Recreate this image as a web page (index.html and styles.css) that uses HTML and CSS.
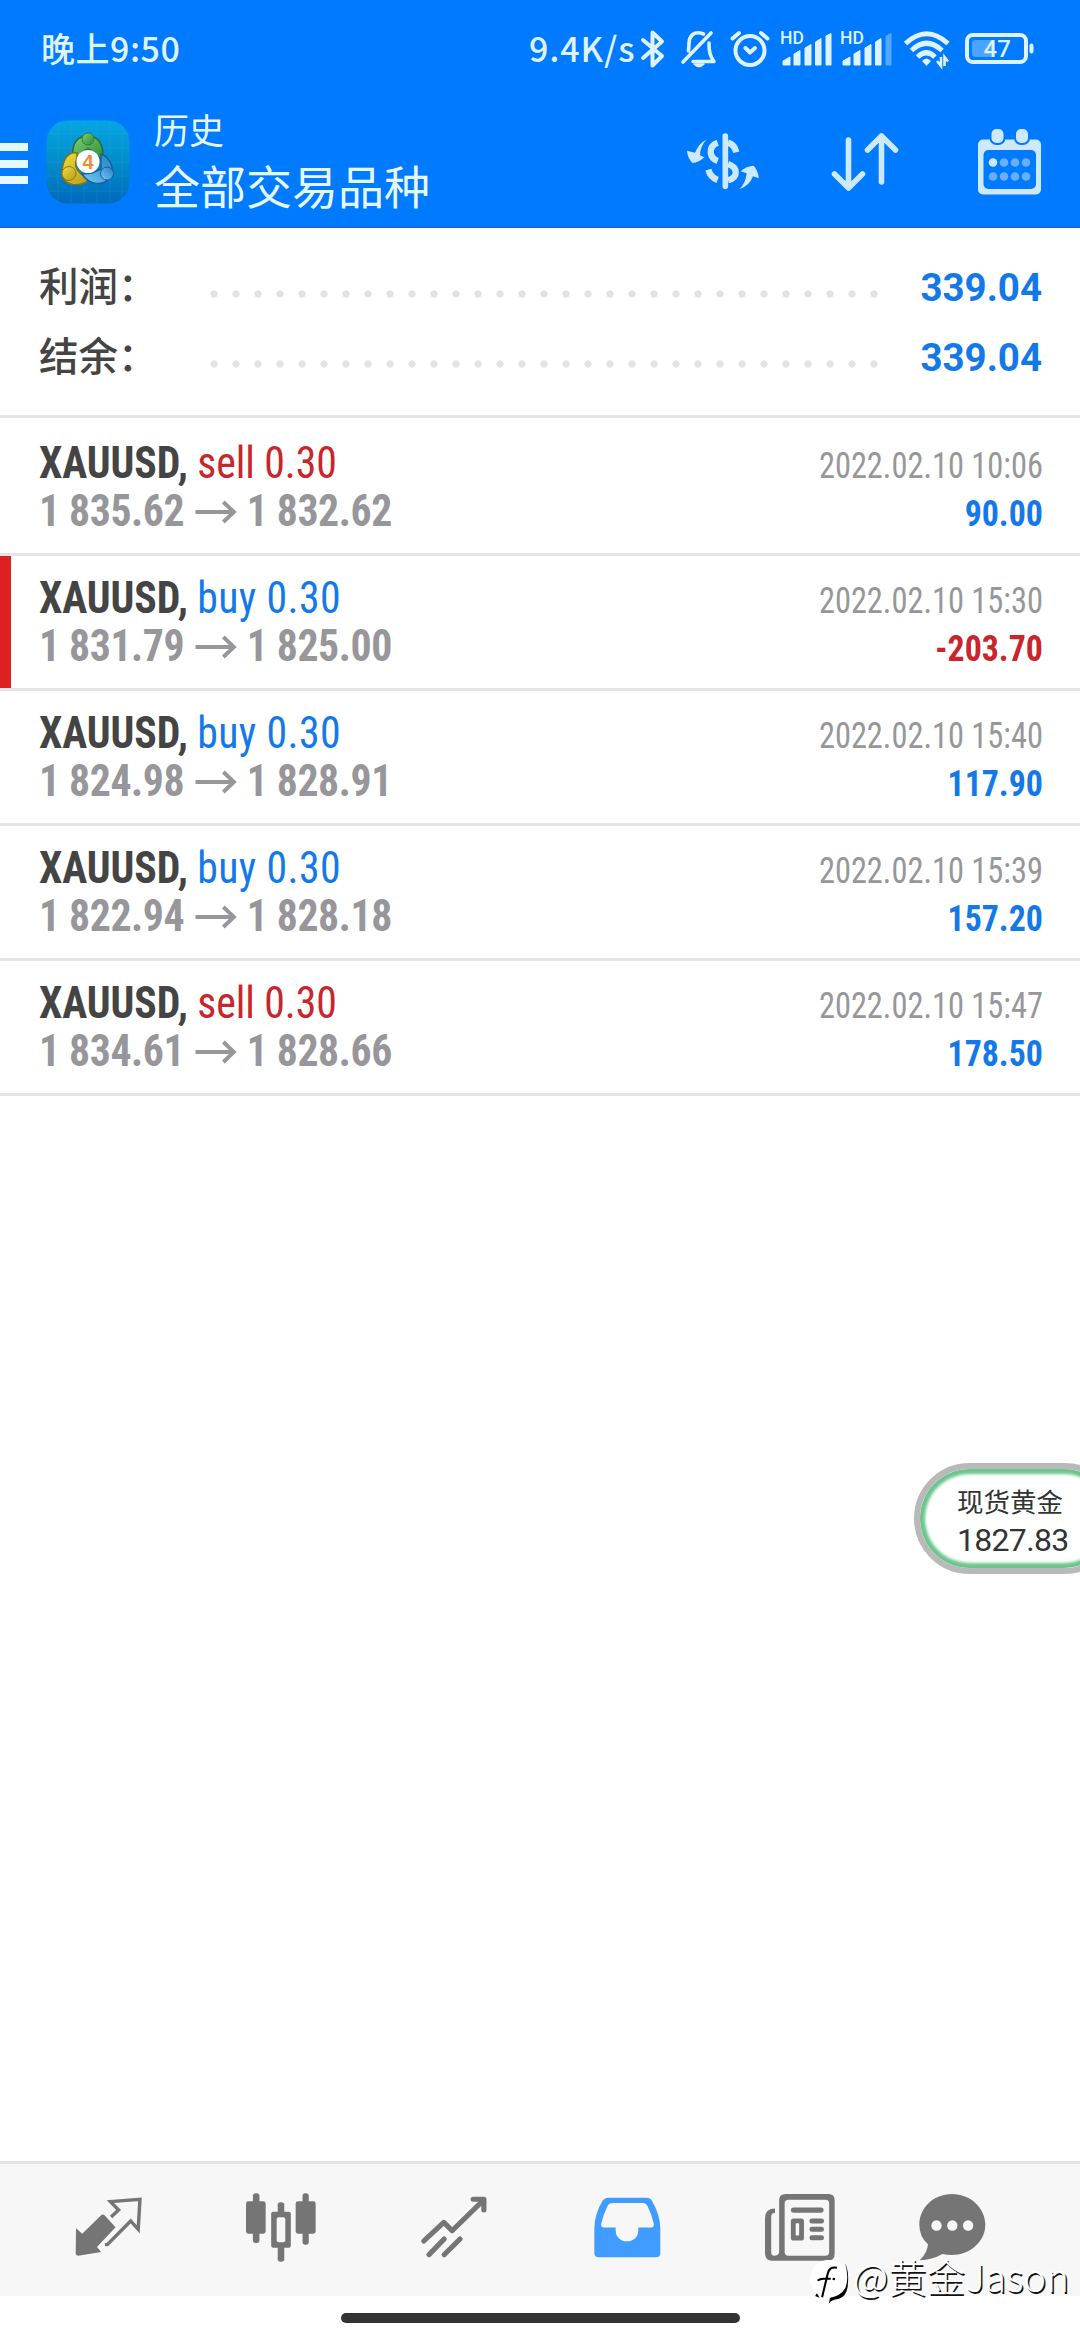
FILE: index.html
```html
<!DOCTYPE html>
<html lang="zh-CN">
<head>
<meta charset="utf-8">
<title>历史</title>
<link rel="stylesheet" href="styles.css">
</head>
<body>
<div class="screen">
  <header class="top">
    <div class="status">
      <span class="clock">晚上9:50</span>
      <span class="speed">9.4K/s</span>
      <svg class="bt" width="26" height="40" viewBox="0 0 26 40" fill="none" stroke="#def2ff" stroke-width="4" stroke-linejoin="round" stroke-linecap="round"><path d="M3 11L22 27L12.500 36.500V3.500L22 12.500L3 29"/></svg>
      <svg class="bell" width="36" height="40" viewBox="0 0 36 40" fill="none" stroke="#def2ff" stroke-width="3.600" stroke-linecap="round" stroke-linejoin="round"><path d="M2 33L30 4M22.500 5C13 1 8 7 8 15L7.500 22M28 14C28 23 29 27 33 32.500H12"/><path d="M13 35H23Q18 40 13 35Z" fill="#def2ff" stroke-width="1.500"/></svg>
      <svg class="alarm" width="40" height="38" viewBox="0 0 40 38" fill="none" stroke="#def2ff" stroke-width="4" stroke-linecap="round" stroke-linejoin="round"><circle cx="20" cy="20.500" r="14.500"/><path d="M2.500 8.500L9 3M37.500 8.500L31 3M15.500 18L20 22.500L25 18"/></svg>
      <svg class="sig" width="52" height="38" viewBox="0 -4 52 38" fill="#def2ff"><text x="0" y="12" class="hd">HD</text><path d="M3 33V29L10 25V33ZM14 33V22L20 18.500V33ZM25 33V16L31 12.500V33ZM35.500 33V10L41 6.500V33ZM46 33V4L51 1.500V33Z" stroke="#def2ff" stroke-linejoin="round"/></svg>
      <svg class="sig" width="52" height="38" viewBox="0 -4 52 38" fill="#def2ff"><text x="0" y="12" class="hd">HD</text><path d="M3 33V29L10 25V33ZM14 33V22L20 18.500V33ZM25 33V16L31 12.500V33ZM35.500 33V10L41 6.500V33Z" stroke="#def2ff" stroke-linejoin="round"/><path d="M46 33V4L51 1.500V33Z" fill="#52a9ff" stroke="#52a9ff" stroke-linejoin="round"/></svg>
      <svg class="wifi" width="48" height="37" viewBox="0 0 48 37" fill="none" stroke="#def2ff" stroke-width="5"><path d="M2.500 12.500Q23.500-7 45 12.500M8.500 19.500Q23.500 5 39 19.500M14.500 26Q23.500 17.500 32 26"/><path d="M19 30Q23.500 25 28 30L23.500 35Z" fill="#def2ff" stroke="none"/><path d="M38 26V35L34 30M41.500 35V26L45 30.500" stroke-width="2.600"/></svg>
      <svg class="batt" width="70" height="32" viewBox="0 0 70 32"><rect x="2" y="2" width="59" height="27" rx="6" fill="none" stroke="#def2ff" stroke-width="4"/><rect x="7" y="7" width="22" height="17" rx="3" fill="#4ba5ff"/><rect x="64.500" y="10.500" width="4" height="10" rx="2" fill="#def2ff"/><text x="18.500" y="24" class="pct">47</text></svg>
    </div>
    <div class="bar">
      <div class="menu"><i></i><i></i><i></i></div>
      <svg class="logo" width="84" height="84" viewBox="0 0 84 84">
        <defs>
          <linearGradient id="bg" x1="0" y1="0" x2="0" y2="1"><stop offset="0" stop-color="#06a5e4"/><stop offset=".5" stop-color="#028dc9"/><stop offset="1" stop-color="#0068bd"/></linearGradient>
          <linearGradient id="g" x1="0" y1="0" x2="1" y2="1"><stop offset="0" stop-color="#82cf78"/><stop offset="1" stop-color="#288b36"/></linearGradient>
          <linearGradient id="y" x1="0" y1="0" x2="1" y2="1"><stop offset="0" stop-color="#efdf46"/><stop offset="1" stop-color="#b59b13"/></linearGradient>
          <linearGradient id="b" x1="0" y1="1" x2="1" y2="0"><stop offset="0" stop-color="#79c9f1"/><stop offset="1" stop-color="#207fc6"/></linearGradient>
        </defs>
        <rect x=".5" y=".5" width="83" height="83" rx="21" fill="url(#bg)"/>
        <path d="M12 2V82M25 1V83M38 1V83M51 1V83M64 1V83M76 5V79M1 14H83M1 28H83M1 42H83M1 56H83M1 71H83" stroke="#36b9e4" stroke-width=".7" opacity=".25"/>
        <path d="M27 38C25 20 34 16 42 16C51 16 58 22 57 40L49 35Q42 23 35 35Z" fill="url(#g)" stroke="#236e38" stroke-width="1.500"/>
        <path d="M31 33C20 31 16 43 16 55C19 67 34 67 43 60L34 53Q27 47 31 38Z" fill="url(#y)" stroke="#846f18" stroke-width="1.500"/>
        <path d="M55 34C65 38 69 49 64 57C57 68 42 64 36 54L46 53L55 49Z" fill="url(#b)" stroke="#175f9e" stroke-width="1.500"/>
        <circle cx="42" cy="19" r="6" fill="url(#g)" stroke="#337d35"/><circle cx="23" cy="53.500" r="7" fill="url(#y)" stroke="#90751a"/><circle cx="61" cy="53.500" r="6.500" fill="url(#b)" stroke="#145f9a"/>
        <circle cx="42" cy="41.500" r="11.500" fill="#fff"/><text x="42" y="48.500" text-anchor="middle" class="four">4</text>
      </svg>
      <div class="titles"><div class="t1">历史</div><div class="t2">全部交易品种</div></div>
      <svg class="a1" width="74" height="58" viewBox="76 96 222 174" fill="none" stroke="#cce9ff" stroke-width="19"><path d="M194 105V256" stroke-width="17" stroke-linecap="round"/><path d="M171 125Q149 133 150 154Q152 173 171 180M143 206Q149 229 171 237M202 125Q221 130 227 154M202 189C233 200 233 229 202 238"/><path d="M137 116Q115 126 103 155L79 149Q80 170 95 186Q113 186 131 169L118 163Q118 137 137 116ZM236 265Q255 247 258 217L240 211Q257 195 279 194Q293 209 294 232L277 226Q266 255 236 265Z" fill="#cce9ff" stroke="none"/></svg>
      <svg class="a2" width="68" height="60" viewBox="0 0 68 60" fill="none" stroke="#cce9ff" stroke-width="5.600" stroke-linecap="round" stroke-linejoin="round"><path d="M17.500 8V56M3.500 42L17.500 56L31.500 42M50.500 50V4M36.500 18L50.500 4L64.500 18"/></svg>
      <svg class="a3" width="63" height="66" viewBox="0 0 63 66"><rect x="0" y="10.500" width="63" height="55" rx="5" fill="#cce9ff"/><rect x="5.500" y="21" width="52.500" height="39" rx="5" fill="#007aff"/><rect x="11.500" y="-1" width="16" height="17" rx="7" fill="#007aff"/><rect x="36" y="-1" width="16" height="17" rx="7" fill="#007aff"/><rect x="13.500" y="0" width="12" height="14" rx="5" fill="#cce9ff"/><rect x="38" y="0" width="12" height="14" rx="5" fill="#cce9ff"/><circle cx="15" cy="33.500" r="4.300" fill="#cce9ff"/><g fill="#66b0ff"><circle cx="26" cy="33.500" r="4.300"/><circle cx="37" cy="33.500" r="4.300"/><circle cx="48" cy="33.500" r="4.300"/><circle cx="15" cy="47.500" r="4.300"/><circle cx="26" cy="47.500" r="4.300"/><circle cx="37" cy="47.500" r="4.300"/><circle cx="48" cy="47.500" r="4.300"/></g></svg>
    </div>
  </header>

  <section class="summary">
    <div class="sum"><span class="lab">利润：</span><span class="dots"></span><b>339.04</b></div>
    <div class="sum"><span class="lab">结余：</span><span class="dots"></span><b>339.04</b></div>
  </section>

  <main class="deals">
    <div class="deal">
      <div class="l"><div class="sym"><b>XAUUSD,</b> <span class="red">sell 0.30</span></div><div class="px"><span>1 835.62</span><svg width="44" height="24" viewBox="0 0 44 24"><use href="#arr"/></svg><span>1 832.62</span></div></div>
      <div class="r"><div class="dt">2022.02.10 10:06</div><div class="pl blue">90.00</div></div>
    </div>
    <div class="deal loss">
      <div class="l"><div class="sym"><b>XAUUSD,</b> <span class="blue buy">buy 0.30</span></div><div class="px"><span>1 831.79</span><svg width="44" height="24" viewBox="0 0 44 24"><use href="#arr"/></svg><span>1 825.00</span></div></div>
      <div class="r"><div class="dt">2022.02.10 15:30</div><div class="pl red">-203.70</div></div>
    </div>
    <div class="deal">
      <div class="l"><div class="sym"><b>XAUUSD,</b> <span class="blue buy">buy 0.30</span></div><div class="px"><span>1 824.98</span><svg width="44" height="24" viewBox="0 0 44 24"><use href="#arr"/></svg><span>1 828.91</span></div></div>
      <div class="r"><div class="dt">2022.02.10 15:40</div><div class="pl blue">117.90</div></div>
    </div>
    <div class="deal">
      <div class="l"><div class="sym"><b>XAUUSD,</b> <span class="blue buy">buy 0.30</span></div><div class="px"><span>1 822.94</span><svg width="44" height="24" viewBox="0 0 44 24"><use href="#arr"/></svg><span>1 828.18</span></div></div>
      <div class="r"><div class="dt">2022.02.10 15:39</div><div class="pl blue">157.20</div></div>
    </div>
    <div class="deal">
      <div class="l"><div class="sym"><b>XAUUSD,</b> <span class="red">sell 0.30</span></div><div class="px"><span>1 834.61</span><svg width="44" height="24" viewBox="0 0 44 24"><use href="#arr"/></svg><span>1 828.66</span></div></div>
      <div class="r"><div class="dt">2022.02.10 15:47</div><div class="pl blue">178.50</div></div>
    </div>
  </main>

  <nav class="tabs">
    <svg width="67" height="60" viewBox="217 146 195 180" preserveAspectRatio="none" fill="#757575"><path d="M220 240L238 256L293 201Q298 196 303 201L335 237L281 296L293 311L226 322Q219 322 219 315Z"/><path d="M322 206L344 185L320 160L406 153L401 243L379 218L311 289H304" fill="none" stroke="#757575" stroke-width="10"/></svg>
    <svg width="70" height="69" viewBox="715 131 203 207" preserveAspectRatio="none" fill="#757575"><rect x="715" y="156" width="57" height="97" rx="7"/><rect x="735" y="132" width="19" height="149" rx="8"/><rect x="859" y="156" width="58" height="97" rx="7"/><rect x="879" y="132" width="18" height="154" rx="8"/><rect x="807" y="159" width="19" height="178" rx="8"/><rect x="788" y="187" width="57" height="108" rx="6"/><rect x="804" y="204" width="25" height="75" rx="6" fill="#f7f7f7"/></svg>
    <svg width="66" height="62" viewBox="1223 139 191 186" preserveAspectRatio="none" fill="none" stroke="#757575" stroke-width="15" stroke-linecap="round" stroke-linejoin="round"><path d="M1231 274L1289 218L1313 243L1402 153M1246 315L1290 268M1290 315L1336 268"/><path d="M1374 149H1405V181" stroke-width="15"/></svg>
    <svg width="67" height="61" viewBox="157 139 195 184" preserveAspectRatio="none"><path d="M197 141H310Q320 141 326 151Q350 194 350 235V308Q350 321 337 321H171Q158 321 158 308V235Q158 190 183 149Q188 141 197 141Z" fill="#419cff"/><path d="M211 157H298Q308 157 313 167Q325 192 331 220Q333 231 323 231H286V239C286 284 220 284 220 239V231H186Q176 231 178 220Q184 192 196 167Q201 157 211 157Z" fill="#f7f7f7"/></svg>
    <svg width="70" height="67" viewBox="656 131 203 200" preserveAspectRatio="none"><path d="M685 174V188Q674 187 674 200V306Q674 315 684 315Q697 315 697 302V150Q697 131 716 131H840Q858 131 858 149V311Q858 330 838 330H677Q656 330 656 308V203Q656 174 685 174Z" fill="#757575"/><rect x="713" y="148" width="129" height="167" rx="11" fill="#f7f7f7"/><g fill="#757575"><rect x="731" y="171" width="95" height="16" rx="8"/><rect x="731" y="204" width="38" height="66" rx="8"/><rect x="785" y="204" width="42" height="15" rx="7"/><rect x="785" y="229" width="42" height="15" rx="7"/><rect x="785" y="254" width="42" height="15" rx="7"/></g><rect x="745" y="218" width="10" height="37" fill="#f7f7f7" rx="2"/></svg>
    <svg width="67" height="67" viewBox="1102 131 195 200" preserveAspectRatio="none"><path d="M1198 131C1252 131 1295 173 1295 223C1295 282 1234 326 1170 310Q1140 328 1104 329Q1127 306 1128 281Q1103 259 1103 223C1103 173 1144 131 1198 131Z" fill="#757575"/><g fill="#f7f7f7"><ellipse cx="1153" cy="225" rx="15" ry="16"/><ellipse cx="1199" cy="225" rx="15" ry="16"/><ellipse cx="1245" cy="225" rx="15" ry="16"/></g></svg>
  </nav>
  <div class="home"><i></i></div>

  <aside class="float"><div class="fn">现货黄金</div><div class="fv">1827.83</div></aside>
  <div class="mark">
    <svg width="38" height="46" viewBox="784 330 110 138" preserveAspectRatio="none"><ellipse cx="838" cy="387" rx="54" ry="57" fill="#fff"/><path d="M862 353Q840 348 835 372L819 442M806 392Q812 386 824 386H844" fill="none" stroke="#000" stroke-width="6"/><path d="M886 340Q898 385 886 415Q872 439 842 443L838 461Q846 449 866 447Q889 440 893 410Q898 366 886 340Z"/><circle cx="853" cy="387" r="4"/><path d="M799 438L812 443L804 430Z"/></svg>
    <span>@黄金Jason</span>
  </div>
  <svg class="defs" width="0" height="0"><defs><g id="arr"><path d="M1 12H41M30 2L41 12L30 22" fill="none" stroke="#97979b" stroke-width="4"/></g></defs></svg>
</div>
</body>
</html>
```
FILE: styles.css
```css
* { box-sizing: border-box; }
body { margin: 0; background: #fff; font-family: Roboto, "Noto Sans CJK SC", sans-serif; }
svg { display: block; flex: none; overflow: visible; }
i { display: block; }
.screen { position: relative; width: 1080px; height: 2340px; overflow: hidden; display: flex; flex-direction: column; background: #fff; }
.defs { position: absolute; }

.top { height: 228px; background: #007aff; border-bottom: 2px solid #146cd3; color: #e6f8ff; }
.status { height: 98px; display: flex; align-items: center; padding-left: 41px; color: #def2ff; font: 500 34px/40px "Noto Sans CJK SC", sans-serif; }
.clock { width: 488px; letter-spacing: .5px; font-size: 34px; padding-bottom: 3px; }
.speed { width: 111px; letter-spacing: .9px; white-space: nowrap; padding-bottom: 3px; }
.bell { margin-left: 15px; }
.alarm { margin-left: 13px; }
.sig { margin: 0 0 4px 10px; }
.sig + .sig { margin-left: 8px; }
.wifi { margin-left: 11px; }
.batt { margin: 0 0 1px 14px; }
.hd { font: 500 17.500px Roboto, sans-serif; }
.pct { font: 500 24px Roboto, sans-serif; fill: #def2ff; }
.four { font: bold 20px "Liberation Sans", sans-serif; fill: #f08a3c; }

.bar { height: 128px; display: flex; align-items: center; }
.menu { width: 28px; display: grid; gap: 8.500px; margin: 3px 18px 0 0; }
.menu i { height: 8px; background: #e6f8ff; }
.titles { width: 556px; padding: 0 0 7px 24px; font-family: "Noto Sans CJK SC", sans-serif; }
.t1 { font-size: 35px; line-height: 50px; }
.t2 { font-size: 46px; line-height: 60px; }
.a2 { margin-left: 71px; }
.a3 { margin-left: 79px; }

.summary { height: 190px; padding: 22px 38px 0 39px; border-bottom: 3px solid #e4e4e4; }
.sum { height: 70px; display: flex; align-items: center; }
.lab { width: 164px; padding-bottom: 2px; font: 500 39.500px/60px "Noto Sans CJK SC", sans-serif; color: #444; }
.dots { width: 682px; height: 22px; margin: 18px auto 0 0; background: radial-gradient(circle, #e3e3e3 3.300px, transparent 4px) 0 0 / 22px 22px; }
.sum b { font-size: 38.500px; line-height: 60px; color: #1479e8; padding-top: 5px; }

.deals { flex: 1; padding-top: 3px; }
.deal { height: 135px; display: flex; justify-content: space-between; padding: 17px 37px 0 39px; border-bottom: 3px solid #e4e4e4; font-stretch: 75%; position: relative; }
.loss::before { content: ""; position: absolute; left: 0; top: 0; bottom: 0; width: 11px; background: #e02020; }
.l { padding-top: 2px; transform: scaleX(.96); transform-origin: left; }
.sym { font-size: 43.500px; line-height: 48px; color: #444; white-space: nowrap; letter-spacing: -.1px; }
.buy { letter-spacing: .4px; }
.px { display: flex; align-items: center; font-size: 43.500px; line-height: 48px; font-weight: bold; color: #97979b; white-space: nowrap; letter-spacing: -.4px; }
.px svg { margin: 0 10px 0 11px; }
.r { text-align: right; padding-top: 4px; }
.dt { font-size: 36px; line-height: 48px; color: #97979a; transform: scaleX(.9); transform-origin: right; }
.pl { font-size: 36px; line-height: 48px; font-weight: bold; transform: scaleX(.94); transform-origin: right; }
.blue { color: #1479e8; }
.red { color: #c8262c; }

.tabs { height: 135px; border-top: 3px solid #e2e2e2; background: #f7f7f7; padding: 0 0 6px 21.500px; display: grid; grid-template-columns: repeat(5, 173px) 131px; align-items: center; justify-items: center; }
.home { height: 44px; display: flex; justify-content: center; padding-top: 17px; }
.home i { width: 399px; height: 10px; border-radius: 5px; background: #333; }

.float { position: absolute; left: 914px; top: 1463px; width: 206px; height: 111px; border: 6px solid #b9b9b9; border-radius: 56px; box-shadow: inset 0 0 3px 5px #6cc58d; background: #fff; padding: 15px 0 0 37px; color: #333; }
.fn { font: 26.500px/34px "Noto Sans CJK SC", sans-serif; }
.fv { font-size: 32px; line-height: 44px; letter-spacing: -.7px; }
.mark { position: absolute; left: 810px; top: 2260px; display: flex; color: #fff; font: 300 38.500px/42px "Noto Sans CJK SC", sans-serif; text-shadow: 1.500px 1.500px 0 #111; white-space: nowrap; }
.mark span { margin: -6px 0 0 5px; }
```
